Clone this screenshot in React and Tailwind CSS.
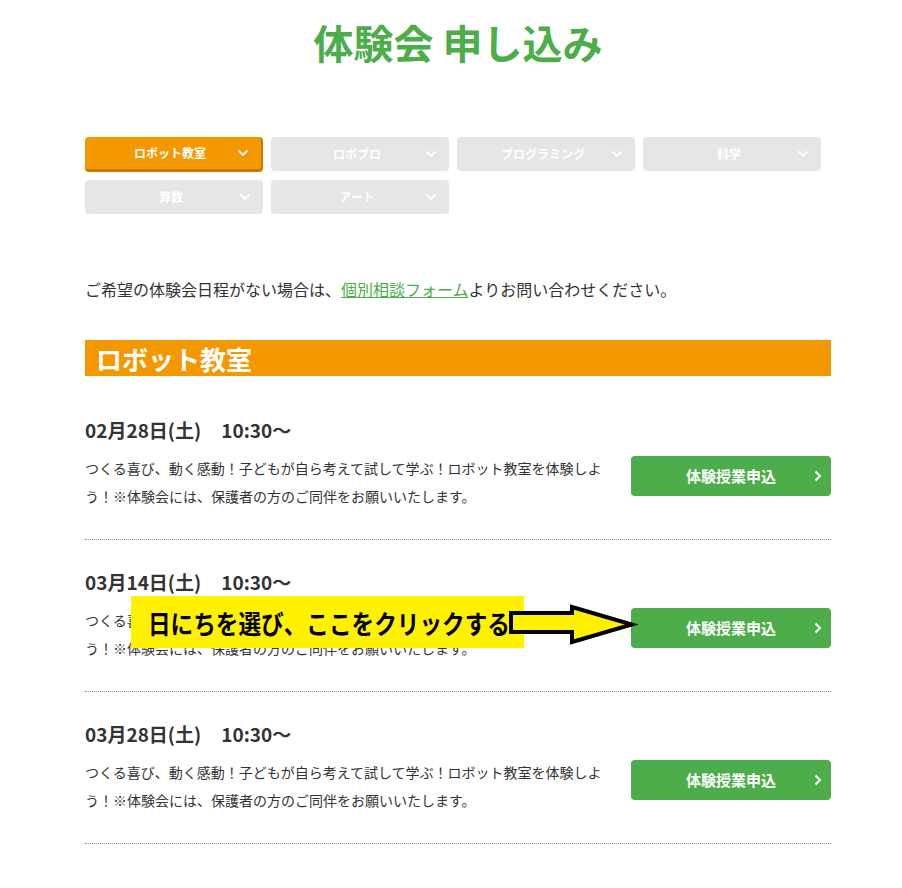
const font = { fontFamily: '"Noto Sans CJK JP", "Noto Sans", sans-serif' };

const tabs = [
  { label: "ロボット教室", active: true },
  { label: "ロボプロ" },
  { label: "プログラミング" },
  { label: "科学" },
  { label: "算数" },
  { label: "アート" },
];

const dates = ["02月28日(土)", "03月14日(土)", "03月28日(土)"];

function ChevronDown() {
  return (
    <svg width="12" height="8" viewBox="0 0 12 8" className="absolute right-[12px] top-1/2 -translate-y-1/2">
      <path d="M1.5 1.5 L6 6 L10.5 1.5" fill="none" stroke="white" strokeWidth="1.8" />
    </svg>
  );
}

function Tab({ label, active }) {
  return (
    <div
      className={
        "relative w-[178px] flex items-center justify-center rounded-[4px] text-[12px] font-bold text-white " +
        (active
          ? "h-[35px] bg-[#f39800] border-b-[3px] border-r-[2px] border-[#c97a00]"
          : "h-[34px] bg-[#e6e6e6]")
      }
    >
      <span className="-ml-[6px]">{label}</span>
      <ChevronDown />
    </div>
  );
}

function Arrow() {
  return (
    <svg width="130" height="42" viewBox="0 0 130 42" className="absolute left-[423px] top-[64px]">
      <polygon
        points="3,9 64,9 64,3 124,20.5 64,38 64,28 3,28"
        fill="#fff100"
        stroke="black"
        strokeWidth="4"
        strokeLinejoin="miter"
      />
    </svg>
  );
}

function Item({ date, first, note }) {
  return (
    <div
      className={
        "relative pt-[28px] pb-[29px] border-b border-dotted border-[#8a8a8a] " + (first ? "mt-[12px]" : "")
      }
    >
      <div className="text-[19px] leading-[28px] font-bold text-[#333]">
        {date}
        <span className="ml-[20px]">10:30〜</span>
      </div>
      <div className="mt-[10px] flex items-start justify-between">
        <p className="w-[522px] text-[14px] leading-[28px] text-[#333]">
          つくる喜び、動く感動！子どもが自ら考えて試して学ぶ！ロボット教室を体験しよう！※体験会には、保護者の方のご同伴をお願いいたします。
        </p>
        <button className="relative mt-[2px] w-[200px] h-[40px] rounded-[4px] bg-[#4cad4a] text-white text-[15px] font-bold flex items-center justify-center">
          体験授業申込
          <svg width="8" height="12" viewBox="0 0 8 12" className="absolute right-[9px] top-1/2 -translate-y-1/2">
            <path d="M1.5 1.5 L6 6 L1.5 10.5" fill="none" stroke="white" strokeWidth="2" />
          </svg>
        </button>
      </div>
      {note && (
        <>
          <div className="absolute left-[46px] top-[56px] w-[393px] h-[52px] bg-[#fff100] flex items-center pl-[17px] overflow-hidden">
            <span className="block whitespace-nowrap text-[26px] font-bold text-black origin-left scale-x-[0.87]">
              日にちを選び、ここをクリックする
            </span>
          </div>
          <Arrow />
        </>
      )}
    </div>
  );
}

export default function App() {
  return (
    <div className="min-h-screen bg-white" style={font}>
      <div className="ml-[85px] w-[746px] pb-[40px]">
        <h1 className="pt-[17px] text-center text-[40px] leading-[50px] font-bold text-[#4cad4a]">
          体験会 申し込み
        </h1>

        <div className="mt-[70px] w-[746px] flex flex-wrap gap-x-[8px] gap-y-[8px] items-start">
          {tabs.map((t) => (
            <Tab key={t.label} label={t.label} active={t.active} />
          ))}
        </div>

        <p className="mt-[63px] text-[16px] leading-[24px] text-[#333]">
          ご希望の体験会日程がない場合は、
          <a href="#" className="text-[#4cad4a] underline">
            個別相談フォーム
          </a>
          よりお問い合わせください。
        </p>

        <h2 className="mt-[39px] h-[36px] bg-[#f39800] pl-[11px] flex items-center text-[26px] font-bold text-white">
          ロボット教室
        </h2>

        {dates.map((d, i) => (
          <Item key={d} date={d} first={i === 0} note={i === 1} />
        ))}
      </div>
    </div>
  );
}
